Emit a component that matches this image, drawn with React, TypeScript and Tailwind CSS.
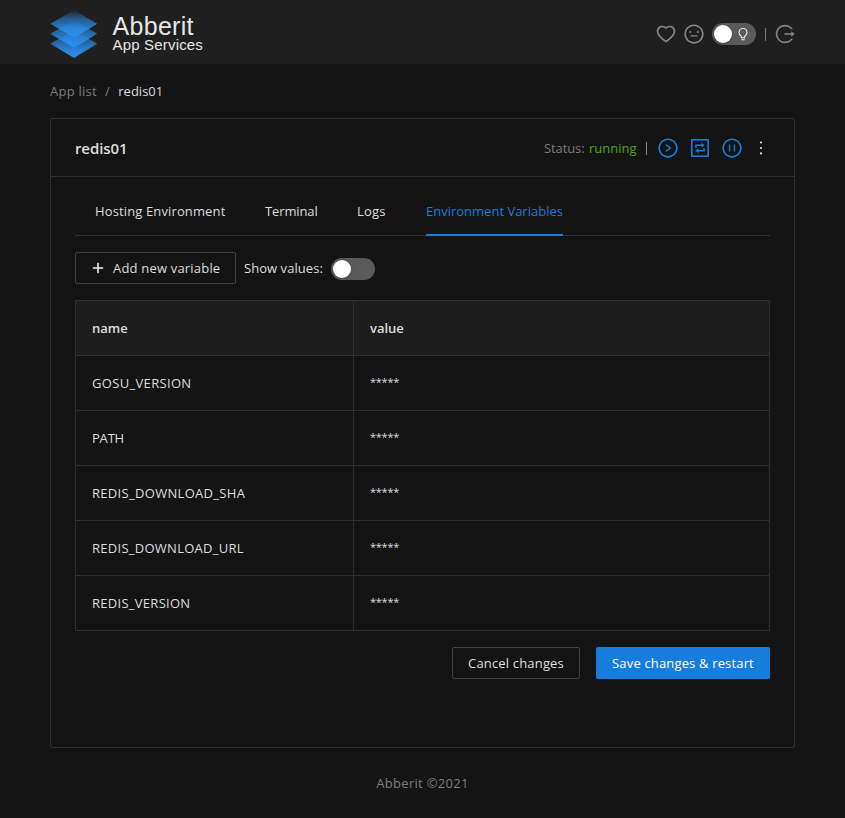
import React from "react";
import {
  AiOutlineHeart,
  AiOutlineMeh,
  AiOutlineBulb,
  AiOutlineLogout,
  AiOutlineRightCircle,
  AiOutlinePauseCircle,
  AiOutlinePlus,
  AiOutlineMore,
} from "react-icons/ai";

function Logo() {
  return (
    <svg width="48" height="50" viewBox="0 0 48 50" className="block">
      <defs>
        <linearGradient id="layer" x1="0" y1="0" x2="0" y2="1">
          <stop offset="0" stopColor="#2a8be6" stopOpacity="0.05" />
          <stop offset="0.35" stopColor="#2a8be6" stopOpacity="0.6" />
          <stop offset="0.7" stopColor="#2a8be6" stopOpacity="0.9" />
          <stop offset="1" stopColor="#2a8ced" />
        </linearGradient>
      </defs>
      <path d="M24 21 L47.2 34.7 L24 49 L0.4 34.7Z" fill="url(#layer)" />
      <path d="M24 11 L47.2 24.7 L24 39 L0.4 24.7Z" fill="url(#layer)" />
      <path d="M24 1 L47.2 14.7 L24 29 L0.4 14.7Z" fill="url(#layer)" />
    </svg>
  );
}

function RestartIcon() {
  return (
    <svg width="22" height="22" viewBox="0 0 22 22" fill="none" stroke="currentColor" className="block">
      <rect x="2.8" y="2.8" width="16.4" height="16.4" strokeWidth="1.6" />
      <path d="M6.9 11V8.2H13M15.1 11v2.8H9" strokeWidth="1.4" />
      <path d="M12.6 5.8v4.8l3.2-2.4zM9.4 11.4v4.8l-3.2-2.4z" fill="currentColor" stroke="none" />
    </svg>
  );
}

function Switch({ children }: { children?: React.ReactNode }) {
  return (
    <span className="flex h-[22px] w-11 items-center justify-between rounded-full bg-[#5a5a5a] pl-0.5 pr-[6px] text-white">
      <span className="size-[18px] rounded-full bg-white shadow-[0_2px_4px_rgba(0,35,11,0.2)]" />
      {children}
    </span>
  );
}

const tabs = [
  { label: "Hosting Environment", box: "w-[130px]", text: "tracking-[0.13px]" },
  { label: "Terminal", box: "w-[52px]", text: "tracking-[-0.12px]" },
  { label: "Logs", box: "w-[29px]", text: "tracking-[0.2px]" },
  { label: "Environment Variables", box: "w-[137px]", text: "", active: true },
];

const rows = [
  { name: "GOSU_VERSION", text: "tracking-[0.33px]" },
  { name: "PATH", text: "tracking-[-0.2px]" },
  { name: "REDIS_DOWNLOAD_SHA", text: "tracking-[0.31px]" },
  { name: "REDIS_DOWNLOAD_URL", text: "tracking-[0.27px]" },
  { name: "REDIS_VERSION", text: "tracking-[0.28px]" },
];

export default function App() {
  return (
    <div className="h-[818px] w-[845px] overflow-hidden whitespace-nowrap bg-[#141414] font-['Open_Sans','Noto_Sans',sans-serif] text-[13px] leading-[22px] text-[#dedede]">
      <header className="flex h-16 items-center justify-between bg-[#1f1f1f] px-[50px]">
        <div className="flex items-center gap-[14.5px] pt-1">
          <Logo />
          <div className="font-['Liberation_Sans',Arial,sans-serif] text-[#e6e6e6]">
            <div className="text-[25px] leading-[22px] tracking-[0.3px]">Abberit</div>
            <div className="text-[15px] leading-[16px] tracking-[0.18px]">App Services</div>
          </div>
        </div>
        <div className="-mr-px flex items-center pt-1 text-[#858585]">
          <AiOutlineHeart size={22} />
          <AiOutlineMeh size={22} className="ml-1.5" />
          <span className="ml-[7px]">
            <Switch>
              <AiOutlineBulb size={14} />
            </Switch>
          </span>
          <span className="ml-[9px] mr-2 h-[13px] w-px bg-[#a0609a]" />
          <AiOutlineLogout size={22} />
        </div>
      </header>

      <nav className="flex h-[54px] items-center px-[50px] text-[#7d7d7d]">
        <span className="w-[47px] tracking-[0.25px]">App list</span>
        <span className="ml-2 mr-[8.5px]">/</span>
        <span className="text-[#dedede]">redis01</span>
      </nav>

      <main className="mx-[50px] h-[630px] rounded-[2px] border border-[#303030]">
        <div className="flex h-[58px] items-center justify-between border-b border-[#303030] px-6">
          <h1 className="text-[15px] font-semibold tracking-[-0.1px]">redis01</h1>
          <div className="-mr-px flex items-center">
            <span className="w-[45px] text-[#7d7d7d] tracking-[-0.1px]">Status:</span>
            <span className="w-[48px] text-[#49aa19]">running</span>
            <span className="ml-[9px] mr-[10px] mt-0.5 h-[13px] w-px bg-[#8c8078]" />
            <div className="flex items-center gap-[10px] text-[#177ddc]">
              <AiOutlineRightCircle size={22} />
              <RestartIcon />
              <AiOutlinePauseCircle size={22} />
            </div>
            <AiOutlineMore size={20} className="ml-2 mt-px" />
          </div>
        </div>

        <div className="px-6 pt-3">
          <div className="flex h-[47px] gap-10 border-b border-[#303030] pl-5">
            {tabs.map((tab) => (
              <div
                key={tab.label}
                className={`${tab.box} ${tab.text} h-[47px] pt-[11px] ${
                  tab.active ? "border-b-2 border-[#177ddc] text-[#177ddc]" : ""
                }`}
              >
                {tab.label}
              </div>
            ))}
          </div>

          <div className="mt-4 flex h-8 items-center">
            <button className="flex h-8 w-[161px] items-center rounded-[2px] border border-[#434343] pl-[15px]">
              <AiOutlinePlus size={14} strokeWidth={50} />
              <span className="ml-2 tracking-[0.19px]">Add new variable</span>
            </button>
            <span className="ml-2 w-[79px] tracking-[0.05px]">Show values:</span>
            <span className="ml-2 pt-0.5">
              <Switch />
            </span>
          </div>

          <table className="mt-4 w-full table-fixed border-collapse text-left">
            <thead>
              <tr className="h-[55px] bg-[#1d1d1d]">
                <th className="w-[278px] border border-[#303030] px-4 font-semibold">name</th>
                <th className="border border-[#303030] px-4 font-semibold">value</th>
              </tr>
            </thead>
            <tbody>
              {rows.map((row) => (
                <tr key={row.name} className="h-[55px]">
                  <td className={`border border-[#303030] px-4 ${row.text}`}>{row.name}</td>
                  <td className="border border-[#303030] px-4 pb-0.5 text-[11px] tracking-[-0.25px]">*****</td>
                </tr>
              ))}
            </tbody>
          </table>

          <div className="mt-4 flex justify-end gap-4">
            <button className="h-8 w-32 rounded-[2px] border border-[#434343] tracking-[0.17px]">
              Cancel changes
            </button>
            <button className="h-8 w-[174px] rounded-[2px] bg-[#177ddc] tracking-[0.16px] text-white">
              Save changes &amp; restart
            </button>
          </div>
        </div>
      </main>

      <footer className="pt-6 text-center tracking-[0.3px] text-[#7d7d7d]">Abberit ©2021</footer>
    </div>
  );
}
